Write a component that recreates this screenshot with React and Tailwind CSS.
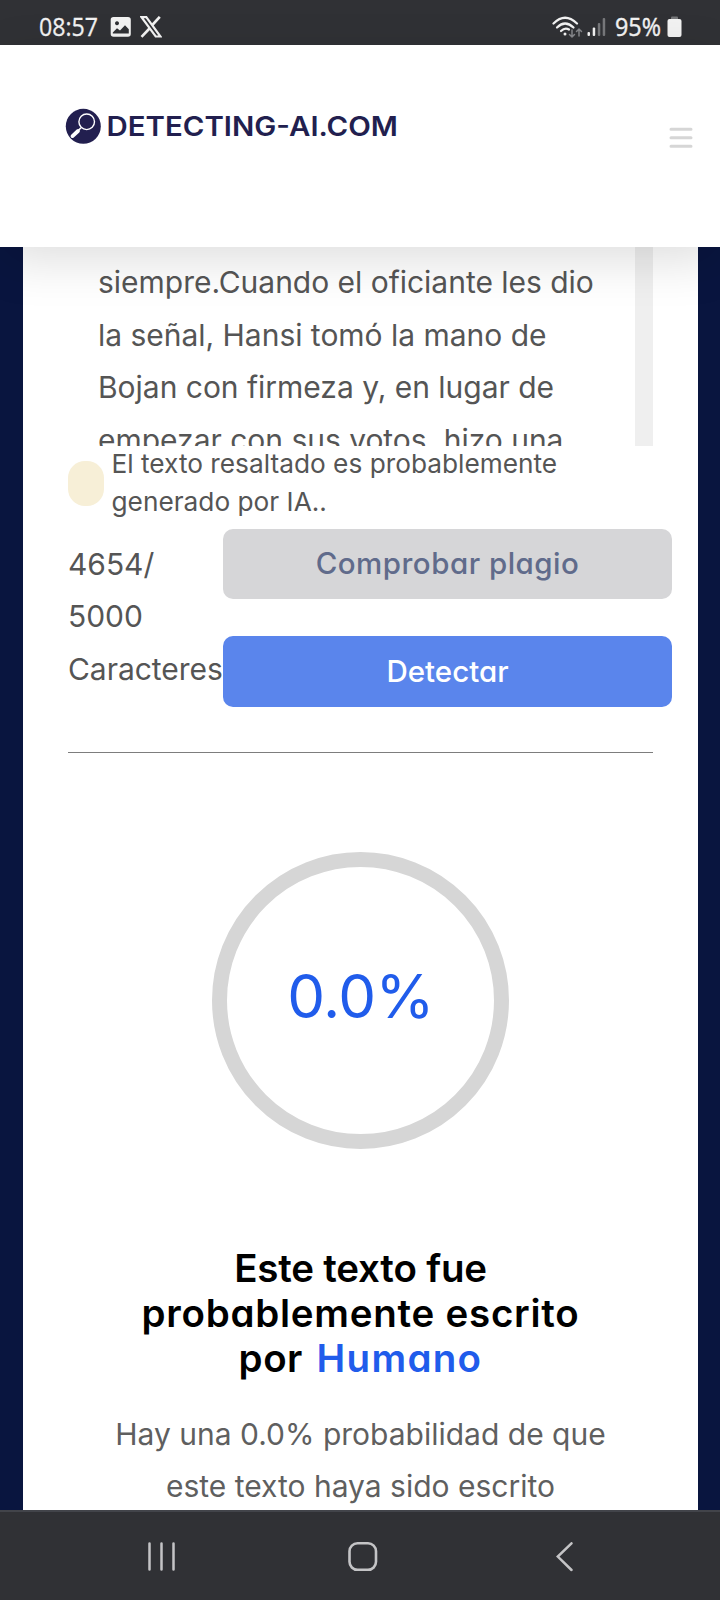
const INTER = "font-['Inter','Liberation_Sans',sans-serif]";

function StatusBar() {
  return (
    <div className="flex h-[45px] shrink-0 items-center bg-[#303135] pl-[39px] pr-[38px] pt-[9px] text-[#f2f2f2]">
      <svg width="62" height="30" className="shrink-0 overflow-visible">
        <text x="0" y="24" textLength="59" lengthAdjust="spacingAndGlyphs" fontSize="26" fill="currentColor" stroke="currentColor" strokeWidth="0.3" className="font-['Open_Sans',sans-serif]">08:57</text>
      </svg>
      <svg width="22" height="22" viewBox="0 0 22 22" className="ml-[9px] shrink-0">
        <path fillRule="evenodd" fill="currentColor" d="M3.5 1h14.500A2.800 2.800 0 0 1 20.800 3.800v14.200A2.800 2.800 0 0 1 18 20.800H3.500A2.800 2.800 0 0 1 .700 18V3.800A2.800 2.800 0 0 1 3.500 1ZM7 5.200a2 2 0 1 0 .010 0ZM2.800 17.500h16v-4.300l-3.800-4-5 5.200-3-2.200-4.200 4.300Z" />
      </svg>
      <svg width="22" height="22" viewBox="0 0 22 22" className="ml-[8px] shrink-0" fill="none" stroke="currentColor">
        <path d="M1.500 1.200h4.800L20.500 20.500h-4.800Z" strokeWidth="2.200" />
        <path d="M19.800.800 12.300 9M9.500 12.500 1.500 20.800" strokeWidth="2.600" />
      </svg>
      <div className="grow" />
      <svg width="31" height="23" viewBox="0 0 31 23" className="shrink-0" fill="none" strokeLinecap="round">
        <path d="M1.500 7.500Q13 -4 25 7.500" stroke="currentColor" strokeWidth="2.200" />
        <path d="M5 11.500Q13 3.500 21.500 11.500" stroke="currentColor" strokeWidth="2.200" />
        <path d="M9 15Q13 11 17 13.500" stroke="currentColor" strokeWidth="2.200" />
        <circle cx="13" cy="18" r="1.500" fill="currentColor" />
        <path d="M20 14v7m-2.500-2.500L20 21l2.500-2.500M27 20v-7m-2.500 2.500L27 13l2.500 2.500" stroke="#85868a" strokeWidth="1.500" />
      </svg>
      <svg width="19" height="20" viewBox="0 0 19 20" className="ml-[4px] mr-px shrink-0">
        <rect x="0.500" y="15" width="2.500" height="4" rx="1" fill="#f2f2f2" />
        <rect x="5.700" y="10.500" width="2.500" height="8.500" rx="1" fill="#f2f2f2" />
        <rect x="10.800" y="6" width="2.500" height="13" rx="1" fill="#77787b" />
        <rect x="15.700" y="1" width="2.500" height="18" rx="1" fill="#77787b" />
      </svg>
      <svg width="48" height="30" className="ml-[8px] shrink-0 overflow-visible">
        <text x="0" y="24" textLength="46" lengthAdjust="spacingAndGlyphs" fontSize="25" fill="currentColor" stroke="currentColor" strokeWidth="0.4" className="font-['Open_Sans',sans-serif]">95%</text>
      </svg>
      <svg width="15" height="22" viewBox="0 0 15 22" className="ml-[4px] shrink-0">
        <rect x="4" y="0.500" width="7" height="4" rx="1" fill="#77787b" />
        <rect x="0.500" y="3" width="14" height="18" rx="2" fill="#f2f2f2" />
      </svg>
    </div>
  );
}

function Header() {
  return (
    <header className="relative z-10 flex h-[202px] shrink-0 items-start justify-between bg-white pl-[65px] pr-[27px] shadow-[0_14px_46px_rgba(0,0,0,0.13)]">
      <div className="flex items-center pt-[63px]">
        <svg width="36" height="36" viewBox="0 0 36 36">
          <circle cx="18.300" cy="18.300" r="17.500" fill="#221f4f" />
          <circle cx="21.700" cy="13.800" r="7.800" fill="none" stroke="#fff" strokeWidth="1.400" />
          <path d="M16 19.800 13 22.800" stroke="#fff" strokeWidth="1.600" />
          <path d="M13 23 7.500 28.100" stroke="#fff" strokeWidth="3.800" strokeLinecap="round" />
        </svg>
        <svg width="292" height="36" viewBox="0 0 292 36" className="ml-[6px]">
          <text x="-0.500" y="28.200" textLength="291.500" lengthAdjust="spacingAndGlyphs" fontSize="27" fontWeight="600" fill="#221f4f" className={INTER}>DETECTING-AI.COM</text>
        </svg>
      </div>
      <svg width="24" height="24" viewBox="0 0 24 24" className="mt-[81px]" stroke="#d6d6d6" strokeWidth="3" strokeLinecap="round">
        <path d="M2 3.300h20M2 11.800h20M2 20.200h20" />
      </svg>
    </header>
  );
}

function Editor() {
  return (
    <div className="flex h-[199px] justify-between overflow-hidden pl-[30px]">
      <p className="whitespace-nowrap pt-[9px] text-[30px] leading-[52.5px] tracking-[-0.02px]">
        siempre.Cuando el oficiante les dio<br />
        la señal, Hansi tomó la mano de<br />
        Bojan con firmeza y, en lugar de<br />
        empezar con sus votos, hizo una
      </p>
      <div className="w-[18px] bg-[#efefef]" />
    </div>
  );
}

function Actions() {
  return (
    <div className="-mr-[19px] mt-[8px] flex">
      <p className="w-[155px] shrink-0 pt-[8.5px] text-[30px] leading-[52.5px] tracking-[-0.05px]">
        4654/<br />5000<br />Caracteres
      </p>
      <div className="flex grow flex-col gap-[37px] text-[29.5px] font-medium [font-feature-settings:'cv11']">
        <button className="h-[70px] rounded-[10px] bg-[#d6d6d8] pb-[2px] tracking-[0.5px] text-[#606b8b]">Comprobar plagio</button>
        <button className="h-[71px] rounded-[10px] bg-[#5a85ec] pb-px text-white">Detectar</button>
      </div>
    </div>
  );
}

function Result() {
  return (
    <section className="flex flex-col items-center text-center">
      <div className="mt-[99px] flex size-[297px] items-center justify-center rounded-full border-[15px] border-[#d6d6d6] text-[60px] tracking-[-0.6px] text-[#205ceb]">
        <span className="-mt-[10px]">0.0%</span>
      </div>
      <h2 className="mt-[97px] whitespace-nowrap text-[38.5px] font-semibold leading-[45px] text-black [font-feature-settings:'cv11']">
        <span className="tracking-[-0.2px]">Este texto fue</span><br />
        <span className="tracking-[0.75px]">probablemente escrito</span><br />
        <span className="tracking-[0.5px]">por</span> <span className="ml-[4px] tracking-[1.3px] text-[#205ceb]">Humano</span>
      </h2>
      <p className="mt-[26.5px] whitespace-nowrap text-[30px] leading-[52.5px] text-[#5f5f5f]">
        Hay una 0.0% probabilidad de que<br />este texto haya sido escrito
      </p>
    </section>
  );
}

function NavBar() {
  return (
    <nav className="flex h-[90px] shrink-0 items-start border-t-2 border-[#42444a] bg-[#303135] pl-[147px] pr-[146px] pt-[30px] text-[#c4c4c6]">
      <svg width="30" height="30" viewBox="0 0 30 30" stroke="currentColor" strokeWidth="2.500" strokeLinecap="round">
        <path d="M2.500 1.500v26M14.500 1.500v26M26.500 1.500v26" />
      </svg>
      <svg width="30" height="30" viewBox="0 0 30 30" fill="none" stroke="currentColor" strokeWidth="2.600" className="ml-[170.5px]">
        <rect x="1.500" y="1.300" width="26.500" height="26.500" rx="8" />
      </svg>
      <svg width="18" height="30" viewBox="0 0 18 30" fill="none" stroke="currentColor" strokeWidth="2.500" strokeLinecap="round" className="ml-auto">
        <path d="M15.500 1.300 1.800 14.600 15.500 28" />
      </svg>
    </nav>
  );
}

export default function App() {
  return (
    <div className={`flex h-[1600px] w-[720px] flex-col overflow-hidden bg-[#09153f] text-[#555] ${INTER}`}>
      <StatusBar />
      <Header />
      <main className="ml-[23px] mr-[22px] h-0 grow overflow-hidden bg-white pl-[45px] pr-[45px]">
        <Editor />
        <div className="-mt-px flex items-center gap-[7.5px]">
          <span className="h-[45px] w-[36px] shrink-0 rounded-[17px] bg-[#f7efd7]" />
          <p className="whitespace-nowrap text-[26.25px] leading-[38px]">
            El texto resaltado es probablemente<br />generado por IA..
          </p>
        </div>
        <Actions />
        <hr className="mt-[45px] border-[#7d7d7d]" />
        <Result />
      </main>
      <NavBar />
    </div>
  );
}
